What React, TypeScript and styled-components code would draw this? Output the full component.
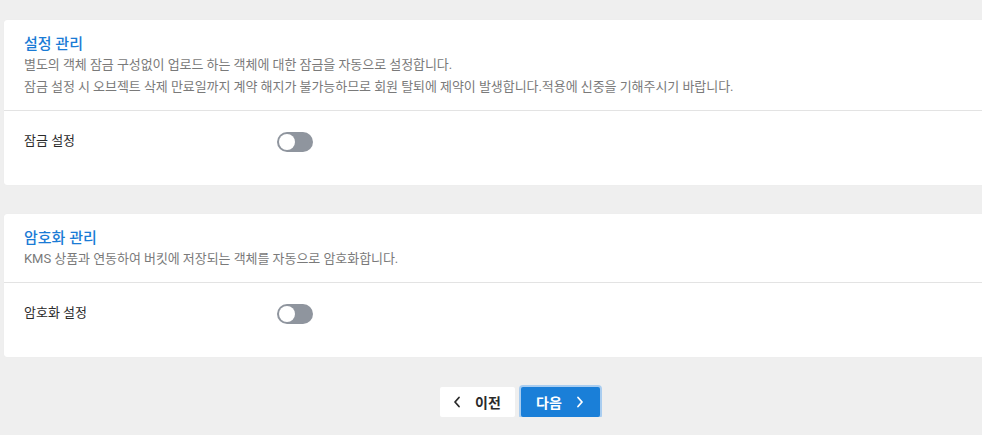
import React from "react";
import styled, { createGlobalStyle } from "styled-components";

const GlobalStyle = createGlobalStyle`
  html, body { margin: 0; padding: 0; background: #efefef; overflow: hidden; }
  body { font-family: "Roboto", "Noto Sans CJK KR", sans-serif; }
  * { box-sizing: border-box; }
`;

const Page = styled.div`
  padding: 20px 0 0 4px;
  display: flex;
  flex-direction: column;
  gap: 29px;
`;

const Card = styled.section`
  background: #fff;
  border-radius: 3px 0 0 3px;
  box-shadow: 0 0 1px rgba(0, 0, 0, 0.06);
`;

const Header = styled.div`
  padding: 14px 20px 12px;
  border-bottom: 1px solid #e3e3e3;
`;

const Title = styled.h2`
  margin: 0;
  font-size: 15px;
  line-height: 20px;
  font-weight: 500;
  color: #1a7bd5;
`;

const Desc = styled.p`
  margin: 0;
  font-size: 13px;
  line-height: 22px;
  color: #7a7a7a;
  letter-spacing: -0.05px;
`;

const Row = styled.div`
  display: flex;
  align-items: center;
  height: 74px;
  padding: 0 20px 12px;
`;

const Label = styled.div`
  width: 253px;
  font-size: 13px;
  line-height: 18px;
  padding-bottom: 3px;
  color: #2a2a2a;
`;

const Toggle = styled.button<{ $on?: boolean }>`
  position: relative;
  width: 36px;
  height: 20px;
  border: none;
  padding: 0;
  border-radius: 10px;
  background: ${(p) => (p.$on ? "#1a7fd8" : "#8f959e")};
  cursor: pointer;
  &::after {
    content: "";
    position: absolute;
    top: 2px;
    left: ${(p) => (p.$on ? "18px" : "2px")};
    width: 16px;
    height: 16px;
    border-radius: 50%;
    background: #fff;
  }
`;

const Footer = styled.div`
  display: flex;
  justify-content: center;
  gap: 6px;
  padding-left: 53px;
  margin-top: 1px;
`;

const NavButton = styled.button<{ $primary?: boolean }>`
  display: flex;
  align-items: center;
  justify-content: center;
  gap: 14px;
  height: 30px;
  padding: 0;
  width: ${(p) => (p.$primary ? "79px" : "75px")};
  border-radius: 2px;
  border: none;
  font-family: "Roboto", "Noto Sans CJK KR", sans-serif;
  font-size: 14px;
  font-weight: 700;
  background: ${(p) => (p.$primary ? "#1a7fd8" : "#fff")};
  color: ${(p) => (p.$primary ? "#fff" : "#2a2a2a")};
  box-shadow: ${(p) => (p.$primary ? "0 0 0 2px #a9cdf0" : "none")};
  cursor: pointer;
  svg { display: block; }
`;

const Chevron = ({ dir }: { dir: "left" | "right" }) => (
  <svg width="8" height="12" viewBox="0 0 8 12" fill="none">
    <path
      d={dir === "left" ? "M6 1.5L2 6l4 4.5" : "M2 1.5L6 6l-4 4.5"}
      stroke="currentColor"
      strokeWidth="1.8"
      strokeLinecap="round"
      strokeLinejoin="round"
    />
  </svg>
);

export default function App() {
  return (
    <>
      <GlobalStyle />
      <Page>
        <Card>
          <Header>
            <Title>설정 관리</Title>
            <Desc>별도의 객체 잠금 구성없이 업로드 하는 객체에 대한 잠금을 자동으로 설정합니다.</Desc>
            <Desc>
              잠금 설정 시 오브젝트 삭제 만료일까지 계약 해지가 불가능하므로 회원 탈퇴에 제약이 발생합니다.적용에 신중을 기해주시기 바랍니다.
            </Desc>
          </Header>
          <Row>
            <Label>잠금 설정</Label>
            <Toggle aria-label="잠금 설정" />
          </Row>
        </Card>
        <Card>
          <Header>
            <Title>암호화 관리</Title>
            <Desc>KMS 상품과 연동하여 버킷에 저장되는 객체를 자동으로 암호화합니다.</Desc>
          </Header>
          <Row>
            <Label>암호화 설정</Label>
            <Toggle aria-label="암호화 설정" />
          </Row>
        </Card>
        <Footer>
          <NavButton>
            <Chevron dir="left" />
            이전
          </NavButton>
          <NavButton $primary>
            다음
            <Chevron dir="right" />
          </NavButton>
        </Footer>
      </Page>
    </>
  );
}
